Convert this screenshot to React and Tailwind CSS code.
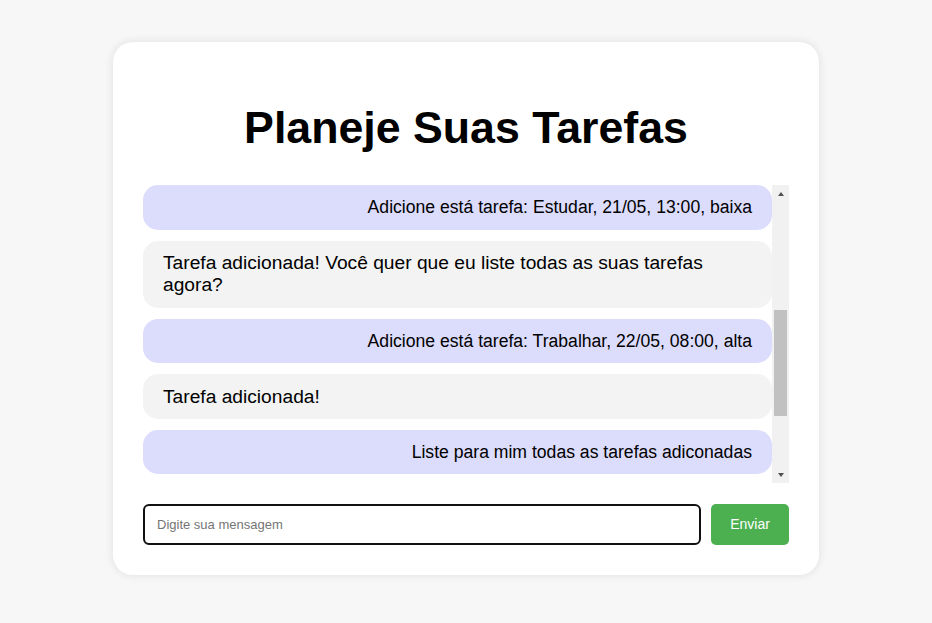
const messages = [
  { from: 'user', text: 'Adicione está tarefa: Estudar, 21/05, 13:00, baixa' },
  { from: 'bot', text: 'Tarefa adicionada! Você quer que eu liste todas as suas tarefas agora?' },
  { from: 'user', text: 'Adicione está tarefa: Trabalhar, 22/05, 08:00, alta' },
  { from: 'bot', text: 'Tarefa adicionada!' },
  { from: 'user', text: 'Liste para mim todas as tarefas adiconadas' },
];

function Message({ from, text }) {
  const isUser = from === 'user';
  return (
    <div
      className={
        'mb-[11px] rounded-[15px] px-5 leading-[1.15] text-black ' +
        (isUser
          ? 'bg-[#dcdcfc] py-3 text-right text-[17.6px]'
          : 'bg-[#f3f3f3] py-[11.5px] text-left text-[19.2px]')
      }
    >
      {text}
    </div>
  );
}

// classic scrollbar look, kept in the flow next to the messages
function ScrollBar() {
  return (
    <div className="flex w-[17px] shrink-0 flex-col bg-[#f1f1f1]">
      <div className="flex h-[17px] items-center justify-center">
        <div className="h-0 w-0 border-x-[3.5px] border-b-[4px] border-x-transparent border-b-[#505050]" />
      </div>
      <div className="flex-1">
        <div className="mx-[2px] mt-[108px] h-[106px] bg-[#c1c1c1]" />
      </div>
      <div className="flex h-[17px] items-center justify-center">
        <div className="h-0 w-0 border-x-[3.5px] border-t-[4px] border-x-transparent border-t-[#505050]" />
      </div>
    </div>
  );
}

export default function App() {
  return (
    <div className="min-h-[623px] bg-[#f7f7f7] pt-[42px] font-['Liberation_Sans',Arial,sans-serif]">
      <div className="mx-auto w-[706px] rounded-[20px] bg-white p-[30px] shadow-[0_0_10px_rgba(0,0,0,0.1)]">
        <h1 className="mt-[30px] mb-[32px] text-center text-[44.7px] font-bold leading-[1.15] text-black">
          Planeje Suas Tarefas
        </h1>

        <div className="mb-[21px] flex h-[298px]">
          <div className="min-w-0 flex-1 overflow-hidden">
            {messages.map((m, i) => (
              <Message key={i} from={m.from} text={m.text} />
            ))}
          </div>
          <ScrollBar />
        </div>

        <div className="flex gap-[10px]">
          <input
            type="text"
            placeholder="Digite sua mensagem"
            className="h-[41px] flex-1 rounded-[6px] border-2 border-[#111] px-3 text-[13px] outline-none placeholder:text-[#757575]"
          />
          <button className="h-[41px] w-[78px] rounded-[5px] bg-[#4caf50] text-[14px] text-white">
            Enviar
          </button>
        </div>
      </div>
    </div>
  );
}
